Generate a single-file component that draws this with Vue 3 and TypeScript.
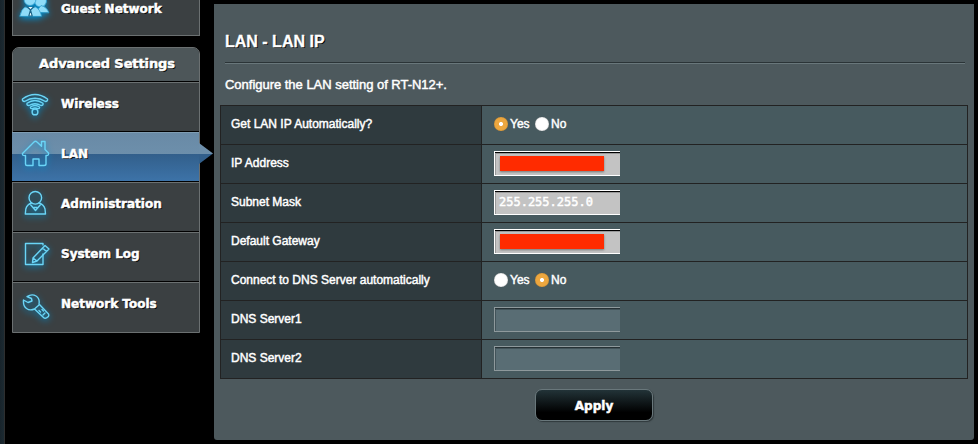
<script setup lang="ts">
import { reactive } from 'vue'

interface MenuItem {
  label: string
  icon: string
  active?: boolean
}

interface Row {
  label: string
  kind: 'radio' | 'masked' | 'text' | 'disabled'
  value: string
}

const menu: MenuItem[] = [
  { label: 'Wireless', icon: 'wireless' },
  { label: 'LAN', icon: 'lan', active: true },
  { label: 'Administration', icon: 'admin' },
  { label: 'System Log', icon: 'log' },
  { label: 'Network Tools', icon: 'tools' },
]

const rows = reactive<Row[]>([
  { label: 'Get LAN IP Automatically?', kind: 'radio', value: 'Yes' },
  { label: 'IP Address', kind: 'masked', value: '' },
  { label: 'Subnet Mask', kind: 'text', value: '255.255.255.0' },
  { label: 'Default Gateway', kind: 'masked', value: '' },
  { label: 'Connect to DNS Server automatically', kind: 'radio', value: 'No' },
  { label: 'DNS Server1', kind: 'disabled', value: '' },
  { label: 'DNS Server2', kind: 'disabled', value: '' },
])
</script>

<template>
  <div class="page">
    <nav class="sidebar">
      <div class="guest">
        <svg class="icon guest-icon" viewBox="0 0 32 32">
          <g fill="#8edcf8" stroke="#2f9fce" stroke-width="0.8">
            <circle cx="21.500" cy="11" r="6" />
            <path d="M17 22L22 15.500Q28 17 29.800 22.500Z" />
            <circle cx="11" cy="9.500" r="6" />
            <path d="M0.800 26Q2.500 19 6 17L11 18.500L16.500 17Q21 19 22.500 26Z" />
          </g>
          <path d="M8.500 17L11.500 20L14.500 17M11.500 20L9.800 26H13.200Z" fill="#e9fbff" stroke="#1b6487" stroke-width="1.1" />
        </svg>
        <span class="name">Guest Network</span>
      </div>
      <div class="group">
        <div class="group-title">Advanced Settings</div>
        <div v-for="item in menu" :key="item.label" class="item" :class="{ active: item.active }">
          <svg v-if="item.icon === 'wireless'" class="icon" viewBox="0 0 32 32">
            <path d="M3.500 12Q16 3 28.500 12Q29 14.200 26.500 14.500Q16 8 5.500 14.500Q3 14.200 3.500 12Z" />
            <path d="M8 16.300Q16 10.700 24 16.300Q24.500 18.500 22 18.500Q16 15 10 18.500Q7.500 18.500 8 16.300Z" />
            <path d="M11.500 20Q16 17 20.500 20Q21 21.600 18.800 21.600Q16 20.300 13.200 21.600Q11 21.600 11.500 20Z" />
            <circle cx="16" cy="24.900" r="2.900" />
          </svg>
          <svg v-else-if="item.icon === 'lan'" class="icon" viewBox="0 0 32 32">
            <path d="M3.500 16.500L15 5Q16.500 3.500 18 5L22.500 9.300V4.500H26V12.500L29.500 16Q30 19 27 18.500V27Q27 28.500 25 28.500H20V22H14V28.500H8Q6.500 28.500 6.500 27V18.500Q3 19 3.500 16.500Z" />
          </svg>
          <svg v-else-if="item.icon === 'admin'" class="icon" viewBox="0 0 32 32">
            <circle cx="16.300" cy="10.800" r="6.300" />
            <path d="M12.500 16Q8 17.500 6.800 22L6.300 27H26.500L26 22Q24.800 17.500 20 16M11 17L16.500 23.500L22 17M15 20.500H18" />
          </svg>
          <svg v-else-if="item.icon === 'log'" class="icon" viewBox="0 0 32 32">
            <path d="M24 8V6.500H6.500V27.500H24V17" />
            <path d="M14 21L26 8.500L30 12L18 24L13.500 25.500ZM14 21L18 24M23.500 11L27.500 14.500" />
          </svg>
          <svg v-else class="icon" viewBox="0 0 32 32">
            <g transform="translate(0 2)">
              <path d="M4.500 11L9 13.500L13 12L12.500 9.500L8 7.500Q13 4.500 17 7Q21 9.500 20 15L29.500 25Q30.500 27.500 28 28.500Q26 30 24.500 28.500L15.500 20Q11 22 7.500 19.500Q4 17 4.500 11Z" />
              <path d="M16 19.500L20 16M20 21.500L21.500 23M23 20.500L24.500 22M24 26L26 24" />
            </g>
          </svg>
          <span class="name">{{ item.label }}</span>
        </div>
      </div>
    </nav>

    <main class="panel">
      <h1>LAN - LAN IP</h1>
      <div class="rule"></div>
      <p class="intro">Configure the LAN setting of RT-N12+.</p>
      <div class="table">
        <div v-for="row in rows" :key="row.label" class="row">
          <div class="label">{{ row.label }}</div>
          <div class="value">
            <template v-if="row.kind === 'radio'">
              <label v-for="opt in ['Yes', 'No']" :key="opt" class="opt" @click="row.value = opt">
                <span class="dot" :class="{ on: row.value === opt }"></span>{{ opt }}
              </label>
            </template>
            <div v-else-if="row.kind === 'masked'" class="field"><span class="mask"></span></div>
            <div v-else class="field" :class="{ disabled: row.kind === 'disabled' }">{{ row.value }}</div>
          </div>
        </div>
      </div>
      <button class="apply">Apply</button>
    </main>
  </div>
</template>

<style>
body {
  background: #000;
  overflow: hidden;
}
</style>

<style scoped>
.page {
  box-sizing: border-box;
  width: 978px;
  height: 444px;
  display: flex;
  background: linear-gradient(90deg, #18242b 0, #1c2a32 4px, #333 4px, #292929 5px, #000 5px);
  font-family: "Liberation Sans", Arial, sans-serif;
  color: #fff;
  overflow: hidden;
}
.sidebar {
  width: 188px;
  margin-left: 12px;
  flex: none;
  font-family: "DejaVu Sans", Verdana, sans-serif;
  font-weight: bold;
  font-size: 12px;
  text-shadow: 1px 1px 0 #000;
  -webkit-text-stroke: 0.5px #fff;
}
.guest {
  box-sizing: border-box;
  height: 36px;
  display: flex;
  align-items: flex-start;
  background: #3b4042;
  border: 1px solid #6b7071;
  border-top: 0;
}
.guest .guest-icon {
  margin-top: -10px;
}
.guest .name {
  margin-top: 1px;
}
.group {
  box-sizing: border-box;
  margin-top: 11px;
  height: 286px;
  border: 1px solid #6b7071;
  border-radius: 7px 7px 0 0;
  background: #3b4042;
}
.group-title {
  box-sizing: border-box;
  height: 34px;
  border-bottom: 1px solid #000;
  border-radius: 6px 6px 0 0;
  background: #4d5659;
  text-align: center;
  line-height: 32px;
  font-size: 13px;
  letter-spacing: -0.1px;
  padding-left: 2px;
}
.item {
  position: relative;
  box-sizing: border-box;
  height: 50px;
  display: flex;
  border-top: 1px solid #6b7071;
  border-bottom: 1px solid #000;
}
.item:last-child {
  border-bottom: 0;
}
.item.active {
  margin-left: -1px;
  padding-left: 1px;
  border-top-color: #7f9db3;
  background: linear-gradient(#698aa6 0, #6d8fab 21px, #325f8b 21px, #3d73a8 100%);
}
.item.active::after {
  content: "";
  position: absolute;
  left: 187px;
  top: 10px;
  width: 14px;
  height: 21px;
  clip-path: polygon(0 0, 100% 50%, 0 100%);
  background: linear-gradient(#6d8fab 50%, #325f8b 50%);
}
.icon {
  width: 32px;
  height: 32px;
  flex: none;
  margin: 4px 0 0 6px;
  fill: none;
  stroke: #6ad5f7;
  stroke-width: 1.4;
  stroke-linejoin: round;
  stroke-linecap: round;
  filter: drop-shadow(0 2px 3px #008fd0);
}
.name {
  margin: 13px 0 0 10px;
  line-height: 16px;
  white-space: nowrap;
}
.panel {
  box-sizing: border-box;
  width: 760px;
  height: 436px;
  margin: 4px 0 0 14px;
  padding: 28px 6px 0;
  background: #4d595d;
  border-radius: 0 0 3px 3px;
}
h1 {
  margin: 0 0 0 5px;
  font-size: 16px;
  line-height: 20px;
  text-shadow: 1px 1px 0 #000;
  -webkit-text-stroke: 0.3px #fff;
}
.rule {
  height: 2px;
  margin: 10px 3px 0 5px;
  background: linear-gradient(#2b3437 50%, #69777b 50%);
}
.intro {
  margin: 13px 0 0 5px;
  font-size: 13px;
  line-height: 16px;
  letter-spacing: -0.02px;
  -webkit-text-stroke: 0.45px #fff;
}
.table {
  margin-top: 12px;
  border: 1px solid #222;
}
.row {
  display: flex;
  height: 38px;
}
.row + .row {
  border-top: 1px solid #222;
}
.label {
  box-sizing: border-box;
  width: 261px;
  padding-left: 10px;
  border-right: 1px solid #222;
  background: #2f3a3e;
  font-size: 12px;
  line-height: 37px;
  -webkit-text-stroke: 0.45px #fff;
}
.value {
  flex: 1;
  display: flex;
  align-items: center;
  padding: 0 0 2px 12px;
  background: #475a5f;
}
.opt {
  width: 41px;
  display: flex;
  align-items: center;
  gap: 2px;
  font-size: 12px;
  -webkit-text-stroke: 0.45px #fff;
}
.dot {
  width: 14px;
  height: 14px;
  border-radius: 50%;
  background: #fff;
  box-shadow: inset 0 0 1px #777;
}
.dot.on {
  background: radial-gradient(circle, #fff 0, #fff 1.6px, #eda73f 2.4px);
  box-shadow: inset 0 0 1px #9a6d2b;
}
.field {
  box-sizing: border-box;
  width: 126px;
  height: 25px;
  border: 1px solid #fff;
  border-right: 0;
  background: #c3c3c3;
  box-shadow: inset 0 1px 0 #000, inset 1px 2px 0 #999;
  padding-left: 4px;
  font-family: "DejaVu Sans Mono", monospace;
  font-size: 12px;
  line-height: 22px;
  -webkit-text-stroke: 0.45px #fff;
}
.field.disabled {
  border-color: #8e999c;
  background: #596d74;
  box-shadow: inset 0 1px 0 #263135, inset 1px 2px 0 #425359;
}
.mask {
  display: block;
  width: 104px;
  height: 15px;
  margin: 4px 0 0 1px;
  background: #ff2b00;
  box-shadow: 0 1px 2px #777;
}
.apply {
  display: block;
  box-sizing: border-box;
  width: 118px;
  height: 32px;
  margin: 10px 0 0 315px;
  padding: 1px 0 0;
  border: 1px solid #69777b;
  border-radius: 7px;
  background: linear-gradient(#223338 0, #000 75%);
  box-shadow: 1px 1px 1px #30393c;
  color: #fff;
  font-family: "DejaVu Sans", Verdana, sans-serif;
  font-size: 12px;
  font-weight: bold;
  -webkit-text-stroke: 0.5px #fff;
}
</style>
